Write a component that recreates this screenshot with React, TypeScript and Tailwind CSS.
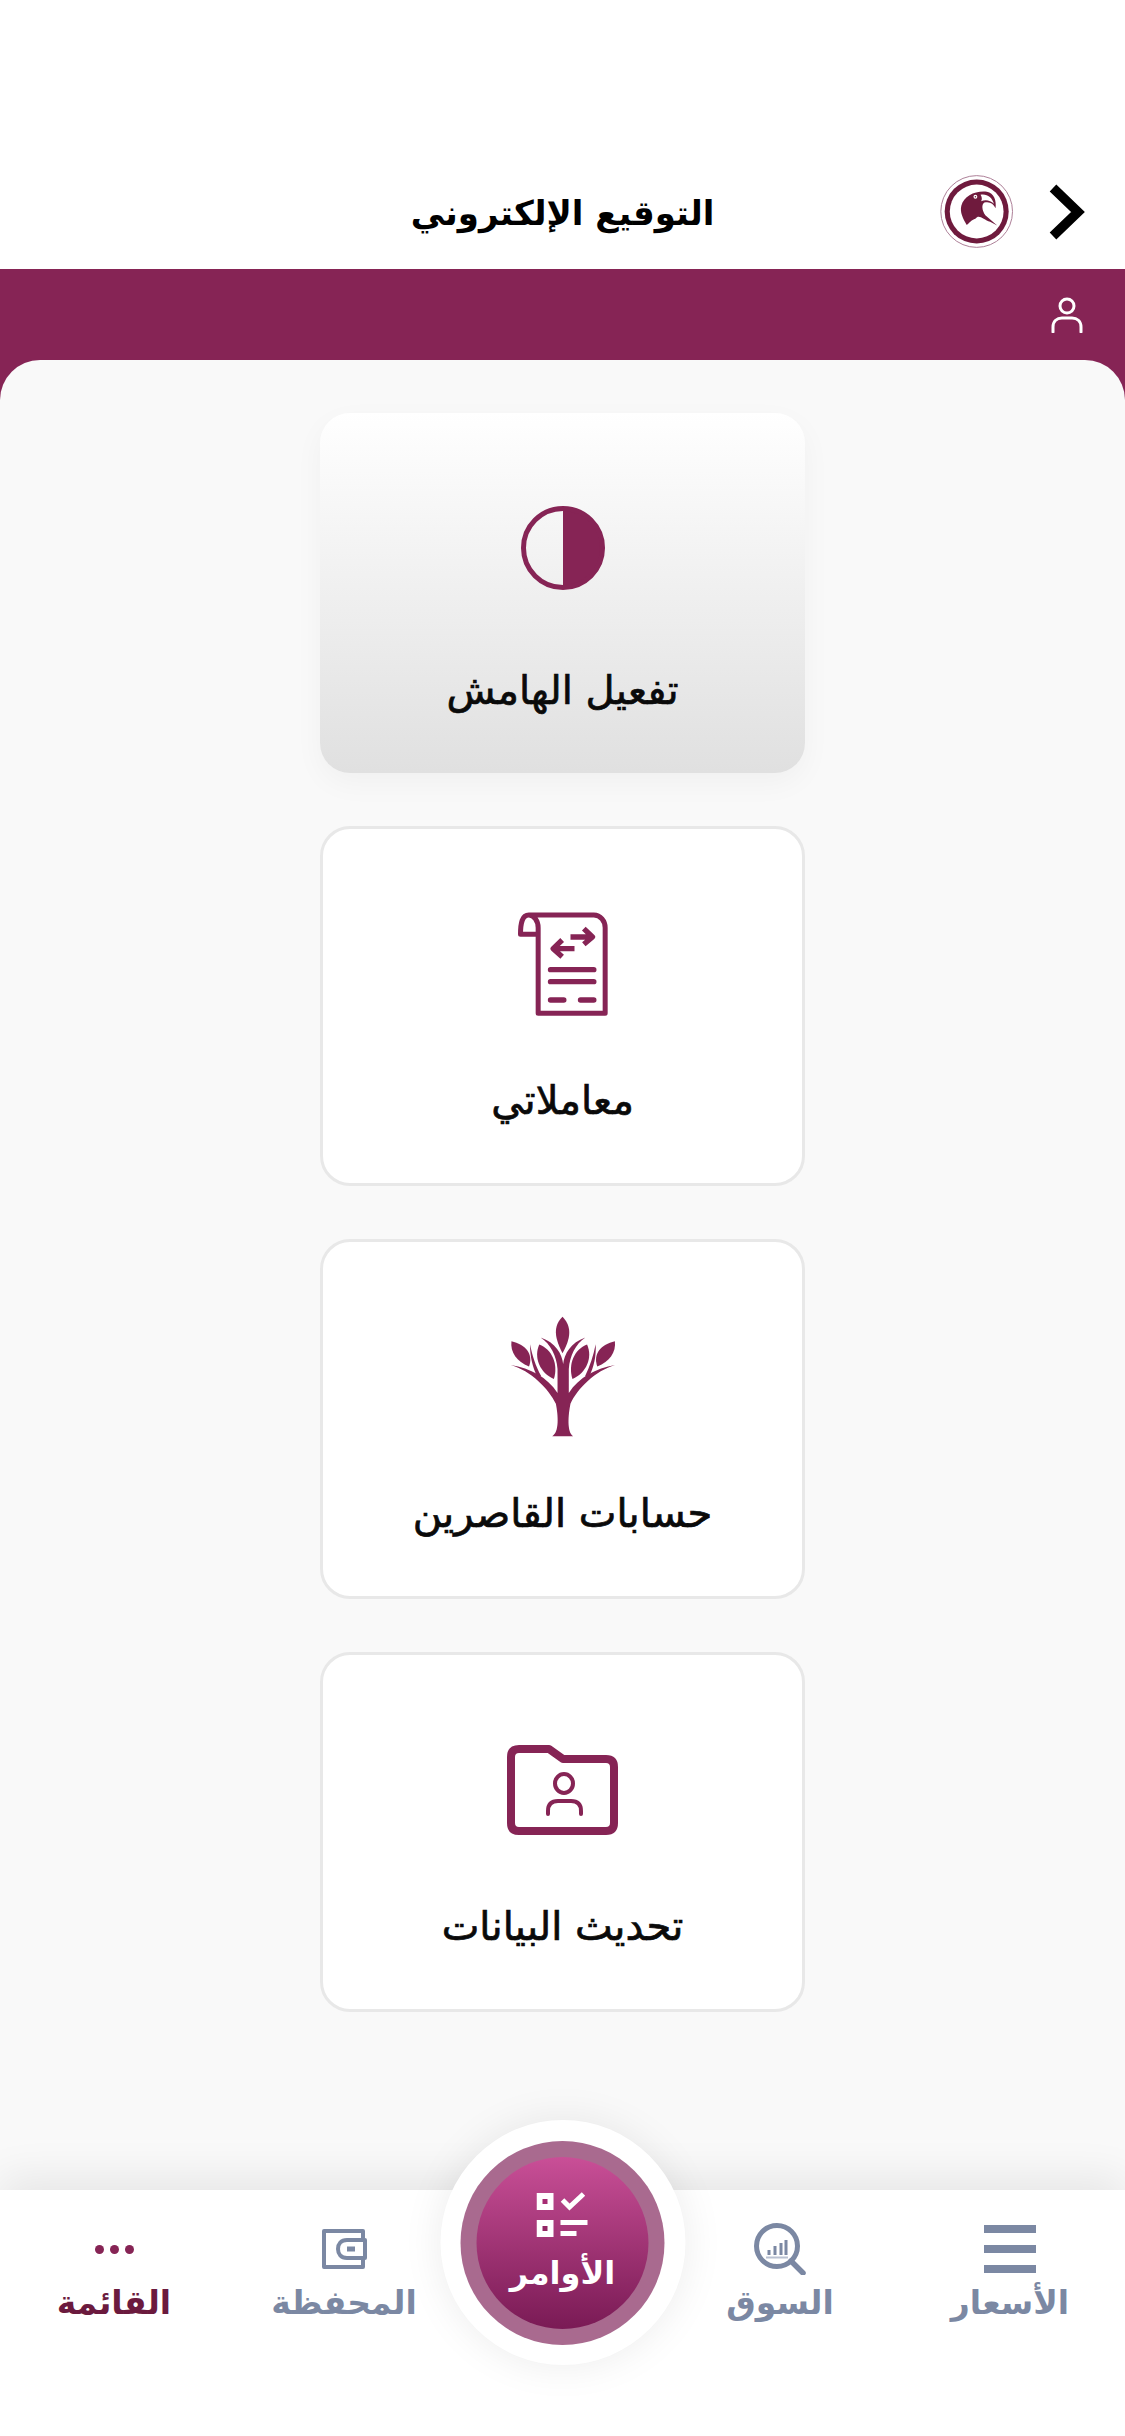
import React from 'react';

const arabic = "[font-family:'DejaVu_Sans',sans-serif]";

const LogoIcon: React.FC = () => (
  <svg width="74" height="73" viewBox="14 14 230 228">
    <circle cx="128" cy="128" r="112" fill="#fff" stroke="#a97a93" strokeWidth="3" />
    <circle cx="128" cy="128" r="100" fill="#6f1a3d" />
    <circle cx="128" cy="128" r="84" fill="#fff" />
    <path d="M80 110C88 78 125 62 160 66C182 70 190 92 187 118C180 102 168 96 152 100C142 106 145 125 155 140L192 172L170 160C150 155 135 135 125 150C110 155 105 165 97 170C85 150 75 130 80 110Z" fill="#6f1a3d" />
    <path d="M140 76C160 72 176 84 182 104C170 92 155 90 142 96C146 90 144 82 140 76Z" fill="#fff" />
    <circle cx="124" cy="82" r="6" fill="#fff" />
    <circle cx="124" cy="82" r="2.5" fill="#6f1a3d" />
  </svg>
);

const HalfCircleIcon: React.FC = () => (
  <svg width="84" height="84" viewBox="0 0 84 84">
    <path d="M42 2A40 40 0 0 1 42 82Z" fill="#862455" />
    <circle cx="42" cy="42" r="39.5" fill="none" stroke="#862455" strokeWidth="5" />
  </svg>
);

const ScrollIcon: React.FC = () => (
  <svg width="92" height="106" viewBox="50 65 275 318" fill="none" stroke="#862455" strokeWidth="15" strokeLinejoin="round">
    <path d="M113 135H60C60 100 65 77 85 77H280C300 77 314 95 314 115V372H113V115C113 95 100 77 85 77" />
    <path d="M210 143H268M250 118L276 143L250 165M222 178H165M185 152L158 178L185 202" strokeWidth="16" />
    <path d="M150 241H280M150 277H280M150 332H190M240 332H280" strokeLinecap="round" strokeWidth="16" />
  </svg>
);

const TreeIcon: React.FC = () => (
  <svg width="108" height="122" viewBox="55 80 325 368" fill="#862455">
    <path d="M216 82C238 105 248 135 216 192C186 135 193 105 216 82Z" />
    <path d="M62 156C104 165 129 195 115 232C78 217 58 190 62 156Z" />
    <path d="M146 166C184 180 204 225 190 270C148 252 128 205 146 166Z" />
    <path d="M290 166C252 180 232 225 246 270C288 252 308 205 290 166Z" />
    <path d="M374 156C332 165 307 195 321 232C358 217 378 190 374 156Z" />
    <path d="M185 443C207 430 203 380 196 345C175 300 120 245 60 228C120 238 170 265 201 312V240C198 200 180 165 150 145C195 160 215 195 218 225C221 195 241 160 285 145C255 165 238 200 235 240V312C266 265 316 238 375 228C315 245 260 300 240 345C233 380 229 430 248 443Z" />
    <path d="M140 262C125 235 118 200 118 165C125 200 135 230 152 262Z" />
    <path d="M296 262C311 235 318 200 316 165C309 200 299 230 284 262Z" />
  </svg>
);

const FolderIcon: React.FC = () => (
  <svg width="111" height="90" viewBox="0 0 111 90" fill="none" stroke="#862455">
    <path d="M4 12Q4 4 12 4H42L56 14H99Q107 14 107 22V78Q107 86 99 86H12Q4 86 4 78Z" strokeWidth="8" strokeLinejoin="round" />
    <ellipse cx="57" cy="38.5" rx="9" ry="9.5" strokeWidth="4" />
    <path d="M41 69V66Q41 56 51 56H64Q74 56 74 66V69" strokeWidth="4" strokeLinecap="round" />
  </svg>
);

const MenuIcon: React.FC = () => (
  <div className="flex flex-col gap-[12px]">
    <div className="w-[52px] h-[8px] bg-[#7b88a3]"></div>
    <div className="w-[52px] h-[8px] bg-[#7b88a3]"></div>
    <div className="w-[52px] h-[8px] bg-[#7b88a3]"></div>
  </div>
);

const MarketIcon: React.FC = () => (
  <svg width="52" height="52" viewBox="0 0 52 52" fill="none">
    <circle cx="23" cy="23" r="20.5" stroke="#7b88a3" strokeWidth="5" />
    <path d="M37 38L49 50" stroke="#7b88a3" strokeWidth="5.5" strokeLinecap="round" />
    <path d="M15 27V32M21 23V32M27 20V32M32 17V32" stroke="#7b88a3" strokeWidth="3" />
    <path d="M12 34.5H34" stroke="#b9c1d1" strokeWidth="2" />
  </svg>
);

const WalletIcon: React.FC = () => (
  <svg width="45" height="42" viewBox="0 0 45 42" fill="none" stroke="#7b88a3" strokeWidth="4">
    <path d="M41 11V3H2V39H41V31" strokeLinejoin="round" />
    <path d="M43 12H25C19 12 16 16 16 21C16 26 19 30 25 30H43Z" strokeLinejoin="round" />
    <path d="M25 21H33" strokeWidth="5" />
  </svg>
);

const DotsIcon: React.FC = () => (
  <div className="flex gap-[6px]">
    <div className="w-[9px] h-[9px] rounded-full bg-[#862455]"></div>
    <div className="w-[9px] h-[9px] rounded-full bg-[#862455]"></div>
    <div className="w-[9px] h-[9px] rounded-full bg-[#862455]"></div>
  </div>
);

const OrdersIcon: React.FC = () => (
  <svg width="52" height="46" viewBox="0 0 52 46" fill="none">
    <rect x="0" y="1" width="17" height="17" fill="#fff" />
    <rect x="6" y="7" width="5" height="5" fill="#a62c73" />
    <rect x="0" y="28" width="17" height="17" fill="#fff" />
    <rect x="6" y="34" width="5" height="5" fill="#922664" />
    <path d="M26 8L33 15L47 2" stroke="#fff" strokeWidth="5" />
    <path d="M24 30.5H51M24 41.5H40" stroke="#fff" strokeWidth="5" />
  </svg>
);

const menuCards = [
  { label: 'تفعيل الهامش', icon: <HalfCircleIcon />, active: true },
  { label: 'معاملاتي', icon: <ScrollIcon />, active: false },
  { label: 'حسابات القاصرين', icon: <TreeIcon />, active: false },
  { label: 'تحديث البيانات', icon: <FolderIcon />, active: false },
];

const navItems = [
  { label: 'القائمة', icon: <DotsIcon />, color: 'text-[#6b1a3e]', width: 'w-[228px]' },
  { label: 'المحفظة', icon: <WalletIcon />, color: 'text-[#7b88a3]', width: 'w-[232px]' },
  { label: 'السوق', icon: <MarketIcon />, color: 'text-[#7b88a3]', width: 'w-[230px] ml-[205px]' },
  { label: 'الأسعار', icon: <MenuIcon />, color: 'text-[#7b88a3]', width: 'w-[230px]' },
];

const App: React.FC = () => {
  return (
    <div className={`w-[1125px] h-[2436px] flex flex-col bg-white overflow-hidden ${arabic}`}>
      {/* Header */}
      <div className="h-[269px] shrink-0 pt-[175px] grid grid-cols-[1fr_auto_1fr] items-start">
        <div></div>
        <h1 dir="rtl" className="mt-[8px] text-[34px] leading-[60px] font-bold text-black">
          التوقيع الإلكتروني
        </h1>
        <div className="flex justify-end items-center gap-[35px] pr-[40px]">
          <LogoIcon />
          <svg width="36" height="56" viewBox="0 0 36 56" fill="none">
            <path d="M4 4L29 28L4 52" stroke="#000" strokeWidth="9.5" />
          </svg>
        </div>
      </div>

      {/* Maroon band and panel */}
      <div className="flex-1 flex flex-col bg-[#862455]">
        <div className="h-[91px] shrink-0 flex items-center justify-end pr-[41px]">
          <svg width="34" height="36" viewBox="0 0 34 36" fill="none" stroke="#fff" strokeWidth="3">
            <circle cx="17" cy="9" r="7" />
            <path d="M3 35V30C3 24 7 21 12 21H22C27 21 31 24 31 30V35" strokeLinecap="round" />
          </svg>
        </div>
        <div className="flex-1 bg-[#f9f9f9] rounded-t-[40px] pt-[53px] flex flex-col items-center gap-[53px]">
          {menuCards.map((card) => (
            <div
              key={card.label}
              className={
                card.active
                  ? 'w-[485px] h-[360px] rounded-[30px] bg-gradient-to-b from-white to-[#e0e0e0] shadow-[0_10px_30px_rgba(0,0,0,0.04)] flex flex-col items-center pt-[74px]'
                  : 'w-[485px] h-[360px] rounded-[30px] bg-white border-[3px] border-[#e8e8e8] flex flex-col items-center pt-[74px]'
              }
            >
              <div className="h-[122px] flex items-center justify-center">{card.icon}</div>
              <div dir="rtl" className={`${card.active ? 'mt-[51px]' : 'mt-[45px]'} h-[60px] leading-[60px] text-[40px] font-normal text-[#0a0a0a] [-webkit-text-stroke:0.7px_#0a0a0a]`}>
                {card.label}
              </div>
            </div>
          ))}
        </div>
      </div>

      {/* Bottom navigation */}
      <div className="relative h-[246px] shrink-0 bg-white shadow-[0_-12px_40px_rgba(0,0,0,0.08)] flex pt-[32px]">
        {navItems.map((item) => (
          <div key={item.label} className={`${item.width} flex flex-col items-center`}>
            <div className="h-[54px] flex items-center justify-center">{item.icon}</div>
            <div dir="rtl" className={`mt-[7px] h-[40px] leading-[40px] text-[33px] font-bold ${item.color}`}>
              {item.label}
            </div>
          </div>
        ))}

        {/* Orders button */}
        <div className="absolute left-1/2 -translate-x-1/2 top-[-70px] w-[245px] h-[245px] rounded-full bg-white shadow-[0_0_40px_rgba(0,0,0,0.08)] flex items-center justify-center">
          <div className="w-[204px] h-[204px] rounded-full bg-[#a96a8f] flex items-center justify-center">
            <div className="w-[172px] h-[172px] rounded-full bg-gradient-to-b from-[#c94f97] to-[#7a1a55] flex flex-col items-center pt-[35px]">
              <OrdersIcon />
              <div dir="rtl" className="mt-[12px] h-[46px] leading-[46px] text-[32px] font-bold text-white">
                الأوامر
              </div>
            </div>
          </div>
        </div>
      </div>
    </div>
  );
};

export default App;
